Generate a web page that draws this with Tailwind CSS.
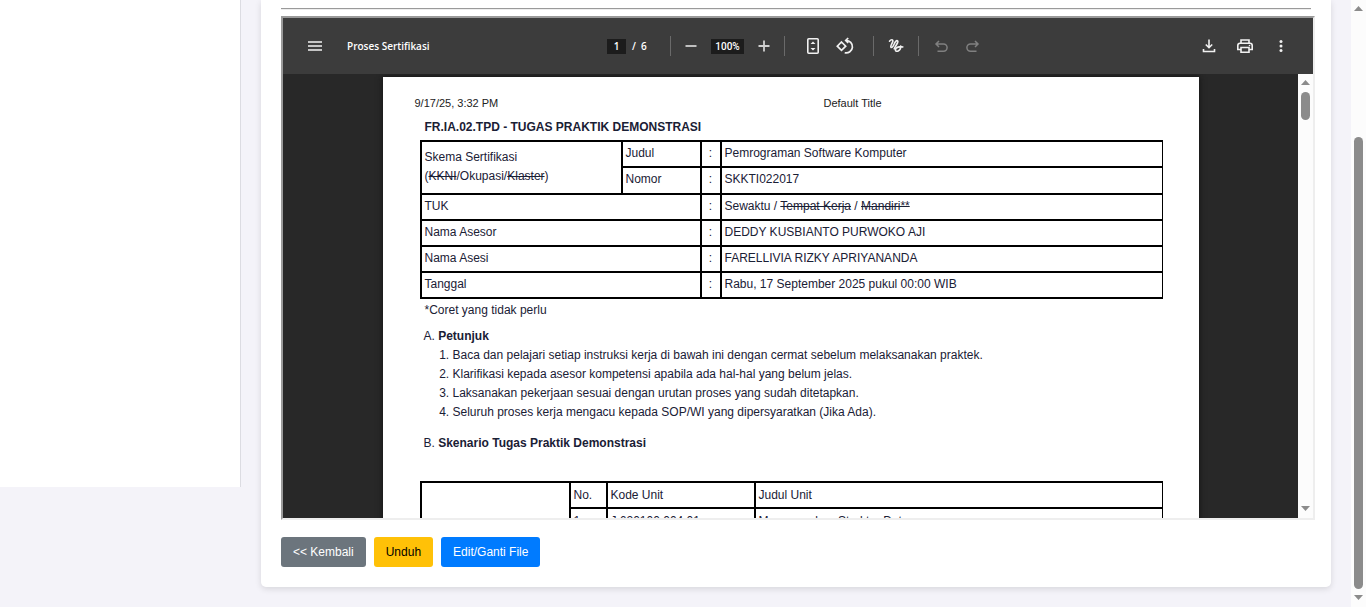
<!DOCTYPE html>
<html lang="id">
<head>
<meta charset="utf-8">
<meta name="viewport" content="width=device-width, initial-scale=1">
<title>Proses Sertifikasi</title>
<script src="https://cdn.jsdelivr.net/npm/@tailwindcss/browser@4"></script>
</head>
<body class="flex h-screen overflow-hidden bg-[#f4f3f9] font-['Liberation_Sans',Arial,sans-serif]">
<aside class="h-[487px] w-[241px] shrink-0 border-r border-[#dcdce2] bg-white"></aside>

<main class="min-w-0 flex-1 px-5">
  <section class="rounded-b-[5px] bg-white px-5 pt-2 pb-5 shadow-[0_2px_6px_rgba(0,0,0,0.12)]">
    <hr class="border-t-1 border-[#9a9a9a] border-b border-b-[#eeeeee]">

    <div class="mt-[6px] -mr-1 flex h-[504px] flex-col border-2 border-t-[#9a9a9a] border-r-[#eeeeee] border-b-[#eeeeee] border-l-[#9a9a9a] bg-[#282828]">
      <header class="flex h-14 shrink-0 items-center bg-[#3c3c3c] pr-[22px] pl-5 font-['Open_Sans','Noto_Sans',sans-serif] text-[10px] text-white">
        <button aria-label="Menu" class="p-0.5 text-[#f1f1f1]"><svg class="size-5" viewBox="0 0 20 20" stroke="currentColor" stroke-width="1.6"><path d="M3 6h14M3 10h14M3 14h14"/></svg></button>
        <h1 class="ml-5 w-[260px] font-['Open_Sans','Noto_Sans',sans-serif] font-semibold">Proses Sertifikasi</h1>
        <input aria-label="Halaman" value="1" class="h-[15px] w-[19px] bg-[#1c1c1c] text-center font-semibold">
        <span class="ml-1.5 w-[38px] font-semibold whitespace-pre">/  6</span>
        <span class="h-5 w-px bg-[#6a6a6a]"></span>
        <button aria-label="Perkecil" class="ml-3 text-[#d0d0d0]"><svg class="size-4" viewBox="0 0 16 16" stroke="currentColor" stroke-width="1.800"><path d="M2.500 8h11"/></svg></button>
        <input aria-label="Zoom" value="100%" class="ml-3 h-[15px] w-[33px] bg-[#1c1c1c] text-center font-['Roboto','Open_Sans',sans-serif] font-medium">
        <button aria-label="Perbesar" class="ml-3 text-[#d0d0d0]"><svg class="size-4" viewBox="0 0 16 16" stroke="currentColor" stroke-width="1.800"><path d="M2.500 8h11M8 2.500v11"/></svg></button>
        <span class="ml-3 h-5 w-px bg-[#6a6a6a]"></span>
        <button aria-label="Sesuaikan halaman" class="ml-[18px] text-[#f1f1f1]"><svg class="size-5" viewBox="0 0 20 20" fill="none" stroke="currentColor" stroke-width="1.600"><rect x="4.800" y="2.800" width="10.400" height="14.400" rx="1"/><path d="m7.500 8 2.500-2.500L12.500 8zM7.500 12l2.500 2.500 2.500-2.500z" fill="currentColor" stroke="none"/></svg></button>
        <button aria-label="Putar" class="ml-3 text-[#f1f1f1]"><svg class="size-5" viewBox="0 0 20 20" fill="none" stroke="currentColor" stroke-width="1.700"><path d="m6.500 6 4.200 4.200-4.200 4.200-4.200-4.200zM13.200 2 10.700 4.500l2.500 2.500M10.900 4.500a6.200 6.200 0 1 1-1.200 12.200"/></svg></button>
        <span class="ml-[18px] h-5 w-px bg-[#6a6a6a]"></span>
        <button aria-label="Gambar" class="ml-3 text-[#f1f1f1]"><svg class="size-5" viewBox="0 0 20 20" fill="none" stroke="currentColor" stroke-width="1.600" stroke-linecap="round" stroke-linejoin="round"><path d="M3.500 5.200C5 3.200 7.200 3.200 6.800 5.500 6.400 7.500 3.600 10.500 5.200 11.500 7.500 12.500 8.500 4.500 11 4.600c3 .4-2.700 6.900-2.800 8.300"/><path d="M16.800 10.900c-3-.8-7.400.4-7.400 3 0 2.800 5.600 1.200 5.300-3.900"/></svg></button>
        <span class="ml-3 h-5 w-px bg-[#6a6a6a]"></span>
        <button aria-label="Urungkan" disabled class="ml-3 text-[#808080]"><svg class="size-5" viewBox="0 0 20 20" fill="none" stroke="currentColor" stroke-width="1.500"><path d="M8 5 5 8l3 3M5 8h7.500a3.600 3.600 0 0 1 0 7.200H6.500"/></svg></button>
        <button aria-label="Ulangi" disabled class="ml-3 text-[#808080]"><svg class="size-5" viewBox="0 0 20 20" fill="none" stroke="currentColor" stroke-width="1.500"><path d="m12 5 3 3-3 3M15 8H7.500a3.600 3.600 0 0 0 0 7.200h6"/></svg></button>
        <div class="ml-auto flex gap-4 text-[#f1f1f1]">
          <button aria-label="Unduh dokumen"><svg class="size-5" viewBox="0 0 20 20" fill="none" stroke="currentColor" stroke-width="1.600"><path d="M10 3.500v8M6.800 8.500 10 11.700l3.200-3.200M4.500 13v2.500h11V13"/></svg></button>
          <button aria-label="Cetak"><svg class="size-5" viewBox="0 0 20 20" fill="none" stroke="currentColor" stroke-width="1.600"><path d="M6 7V4h8v3M6 13.500H2.800V9.500Q2.800 7.200 5 7.200h10q2.200 0 2.200 2.300v4H14M6 11.500h8v4.700H6z"/><circle cx="14.500" cy="9.500" r=".8" fill="currentColor" stroke="none"/></svg></button>
          <button aria-label="Opsi lainnya"><svg class="size-5" viewBox="0 0 20 20" fill="currentColor"><circle cx="10" cy="5.500" r="1.500"/><circle cx="10" cy="10" r="1.500"/><circle cx="10" cy="14.500" r="1.500"/></svg></button>
        </div>
      </header>

      <div class="flex min-h-0 flex-1">
        <div class="flex min-w-0 flex-1 justify-center overflow-hidden pt-[3px]">
          <article class="h-[1056px] w-[816px] shrink-0 bg-white px-[37px] pt-[19px] text-[12px] leading-[19px] text-[#1a2035] shadow-[0_0_6px_#111]">
            <div class="-ml-[5px] flex h-[22px] text-[11px] leading-[14px] text-[#222]">
              <span class="w-[409px]">9/17/25, 3:32 PM</span><span>Default Title</span>
            </div>
            <h2 class="ml-[5px] font-bold">FR.IA.02.TPD - TUGAS PRAKTIK DEMONSTRASI</h2>
            <table class="mt-[3px] w-[743px] table-fixed border-separate border-spacing-0 border-r border-b-2 border-black text-left [&_td]:border-t-2 [&_td]:border-l-2 [&_td]:border-black [&_td]:px-[3px] [&_td]:pt-0 [&_td]:pb-0.5 [&_td]:align-middle">
              <colgroup><col class="w-[201px]"><col class="w-[79px]"><col class="w-5"><col></colgroup>
              <tr class="h-[26px]"><td rowspan="2">Skema Sertifikasi<br>(<s>KKNI</s>/Okupasi/<s>Klaster</s>)</td><td>Judul</td><td class="text-center">:</td><td>Pemrograman Software Komputer</td></tr>
              <tr class="h-[27px]"><td>Nomor</td><td class="text-center">:</td><td>SKKTI022017</td></tr>
              <tr class="h-[26px]"><td colspan="2">TUK</td><td class="text-center">:</td><td>Sewaktu / <s>Tempat Kerja</s> / <s>Mandiri**</s></td></tr>
              <tr class="h-[26px]"><td colspan="2">Nama Asesor</td><td class="text-center">:</td><td>DEDDY KUSBIANTO PURWOKO AJI</td></tr>
              <tr class="h-[26px]"><td colspan="2">Nama Asesi</td><td class="text-center">:</td><td>FARELLIVIA RIZKY APRIYANANDA</td></tr>
              <tr class="h-[26px]"><td colspan="2">Tanggal</td><td class="text-center">:</td><td>Rabu, 17 September 2025 pukul 00:00 WIB</td></tr>
            </table>
            <p class="mt-0.5 ml-[5px]">*Coret yang tidak perlu</p>
            <h3 class="mt-[7px] ml-1">A. <b>Petunjuk</b></h3>
            <ol class="ml-[33px] list-decimal">
              <li>Baca dan pelajari setiap instruksi kerja di bawah ini dengan cermat sebelum melaksanakan praktek.</li>
              <li>Klarifikasi kepada asesor kompetensi apabila ada hal-hal yang belum jelas.</li>
              <li>Laksanakan pekerjaan sesuai dengan urutan proses yang sudah ditetapkan.</li>
              <li>Seluruh proses kerja mengacu kepada SOP/WI yang dipersyaratkan (Jika Ada).</li>
            </ol>
            <h3 class="mt-3 ml-1">B. <b>Skenario Tugas Praktik Demonstrasi</b></h3>
            <table class="mt-7 w-[743px] table-fixed border-separate border-spacing-0 border-r border-b-2 border-black [&_td]:border-t-2 [&_td]:border-l-2 [&_td]:border-black [&_td]:px-[3px] [&_td]:py-0">
              <colgroup><col class="w-[149px]"><col class="w-[37px]"><col class="w-[148px]"><col></colgroup>
              <tr class="h-[26px]"><td rowspan="2"></td><td>No.</td><td>Kode Unit</td><td>Judul Unit</td></tr>
              <tr class="h-[26px]"><td>1.</td><td>J.620100.004.01</td><td>Menggunakan Struktur Data</td></tr>
            </table>
          </article>
        </div>
        <div class="flex w-[15px] shrink-0 flex-col items-center bg-[#fcfcfc] pt-1.5 pb-[7px]" aria-hidden="true">
          <svg class="h-[5px] w-[9px]" viewBox="0 0 9 5" fill="#8b8b8b"><path d="M0 5 4.500 0 9 5z"/></svg>
          <span class="mt-[7px] h-7 w-[9px] rounded-full bg-[#8b8b8b]"></span>
          <svg class="mt-auto h-[5px] w-[9px]" viewBox="0 0 9 5" fill="#8b8b8b"><path d="m0 0 4.500 5L9 0z"/></svg>
        </div>
      </div>
    </div>

    <div class="mt-[17px] flex gap-2 text-[12px]">
      <button class="h-[30px] rounded-[3px] bg-[#6c757d] px-3 text-white">&lt;&lt; Kembali</button>
      <button class="h-[30px] rounded-[3px] bg-[#ffc107] px-3 text-black">Unduh</button>
      <button class="h-[30px] rounded-[3px] bg-[#007bff] px-3 text-white">Edit/Ganti File</button>
    </div>
  </section>
</main>

<div class="flex w-[15px] shrink-0 flex-col items-center bg-[#fcfcfc] pt-1.5 pb-[7px]" aria-hidden="true">
  <svg class="h-[5px] w-[9px]" viewBox="0 0 9 5" fill="#8b8b8b"><path d="M0 5 4.500 0 9 5z"/></svg>
  <span class="mt-auto h-[452px] w-[9px] rounded-full bg-[#8b8b8b]"></span>
  <svg class="mt-1.5 h-[5px] w-[9px]" viewBox="0 0 9 5" fill="#8b8b8b"><path d="m0 0 4.500 5L9 0z"/></svg>
</div>
</body>
</html>
